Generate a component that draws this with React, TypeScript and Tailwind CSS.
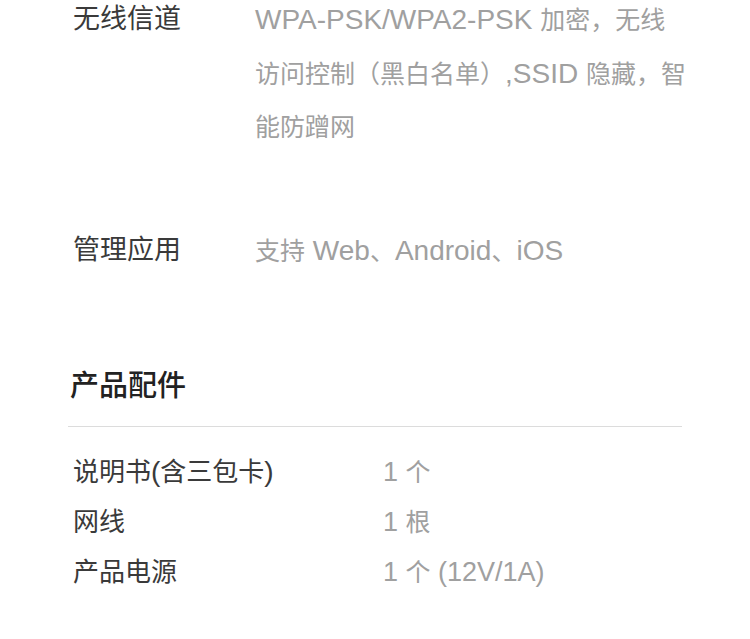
const FONT = "font-['Liberation_Sans','Noto_Sans_CJK_SC',sans-serif]";

// Latin runs render a touch larger than the CJK glyphs around them
function Mixed({ text, latin }: { text: string; latin: string }) {
  return (
    <>
      {text.split(/([\x20-\x7E]+)/).map((part, i) =>
        /^[\x20-\x7E]+$/.test(part) ? (
          <span key={i} className={latin}>
            {part}
          </span>
        ) : (
          part
        )
      )}
    </>
  );
}

const specs = [
  {
    label: "无线信道",
    value: "WPA-PSK/WPA2-PSK 加密，无线访问控制（黑白名单）,SSID 隐藏，智能防蹭网",
  },
  { label: "管理应用", value: "支持 Web、Android、iOS" },
];

const parts = [
  { label: "说明书(含三包卡)", value: "1 个" },
  { label: "网线", value: "1 根" },
  { label: "产品电源", value: "1 个 (12V/1A)" },
];

export default function App() {
  return (
    <div className={`w-[750px] h-[639px] overflow-hidden bg-white ${FONT}`}>
      {/* ─── SPEC ROWS ─── */}
      <div className="pl-[73px] mt-[-7px] flex flex-col gap-[70px]">
        {specs.map((s) => (
          <div key={s.label} className="flex leading-[53px]">
            <div className="w-[182px] shrink-0 text-[27px] text-[#3a3a3a]">{s.label}</div>
            <div className="w-[434px] text-[25px] text-[#a0a0a0]">
              <Mixed text={s.value} latin="text-[28px]" />
            </div>
          </div>
        ))}
      </div>

      {/* ─── ACCESSORIES ─── */}
      <div className="mx-[68px] mt-[88px]">
        <h2 className="text-[29px] leading-[40px] font-medium text-[#222] pl-[2px]">产品配件</h2>
        <div className="mt-[20px] h-px bg-[#dcdcdc]" />
        <div className="mt-[20px] pl-[5px] flex flex-col">
          {parts.map((p) => (
            <div key={p.label} className="flex leading-[50px]">
              <div className="w-[310px] shrink-0 text-[26px] text-[#3a3a3a]">
                <Mixed text={p.label} latin="text-[28px]" />
              </div>
              <div className="text-[25px] text-[#a0a0a0]">
                <Mixed text={p.value} latin="text-[27px]" />
              </div>
            </div>
          ))}
        </div>
      </div>
    </div>
  );
}
